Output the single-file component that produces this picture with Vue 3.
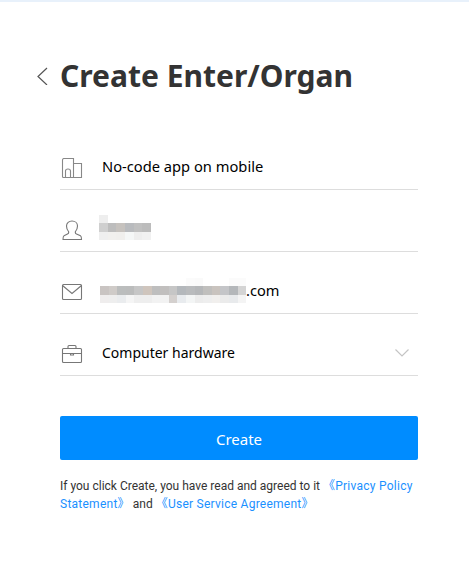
<template>
  <div class="page">
    <div class="top-line"></div>
    <div class="head">
      <svg class="back" viewBox="0 0 12 18" width="12" height="18" fill="none" stroke="#555" stroke-width="1.2">
        <path d="M11 1L2 9.5L11 18" />
      </svg>
      <h1>Create Enter/Organ</h1>
    </div>
    <form class="form" @submit.prevent>
      <div class="row">
        <svg class="ico" viewBox="0 0 22 20" width="22" height="20" fill="none" stroke="#888" stroke-width="1.1">
          <path d="M2.5 19.5H20.5V5.5H12.5V19.5M12.5 19.5V0.5H3Q1.5 0.5 1.5 2V18.5Q1.5 19.5 2.5 19.5M4.5 19.5V13Q4.5 11 7 11Q9.5 11 9.5 13V19.5" />
        </svg>
        <span class="val big">No-code app on mobile</span>
      </div>
      <div class="row">
        <svg class="ico" viewBox="0 0 22 20" width="22" height="20" fill="none" stroke="#777" stroke-width="1.1">
          <path d="M7.5 11.5C5.5 9 5.5 7 5.5 6C5.5 3 8 1 11 1S16.5 3 16.5 6C16.5 7 16.5 9 14.5 11.5C14 12.8 14.5 13.5 15.5 14L19.5 15.8C20.5 16.3 20.5 17.5 20.5 19.5H2C2 17.5 2 16.3 3 15.8L6.5 14C7.5 13.5 8 12.8 7.5 11.5Z" />
        </svg>
        <div class="mosaic name">
          <i v-for="(c, i) in nameBlocks" :key="i" :style="{ background: c }"></i>
        </div>
      </div>
      <div class="row">
        <svg class="ico" viewBox="0 0 22 20" width="22" height="20" fill="none" stroke="#777" stroke-width="1.1">
          <rect x="1.5" y="2.5" width="19" height="15" rx="1" />
          <path d="M1.5 3.5L11 11.5L20.5 3.5" />
        </svg>
        <div class="mosaic email">
          <i v-for="(c, i) in emailBlocks" :key="i" :style="{ background: c }"></i>
        </div>
        <span class="val dotcom">.com</span>
      </div>
      <div class="row">
        <svg class="ico" viewBox="0 0 22 20" width="22" height="20" fill="none" stroke="#777" stroke-width="1.1">
          <rect x="1.5" y="4.5" width="19" height="14" rx="1" />
          <path d="M7 4.5V2.5Q7 1.5 8 1.5H14Q15 1.5 15 2.5V4.5M1.5 9.5H20.5" />
          <path d="M9.5 9.5H12.5V11H9.5Z" />
        </svg>
        <span class="val">Computer hardware</span>
        <svg class="caret" viewBox="0 0 14 8" width="14" height="8" fill="none" stroke="#c4c4c4" stroke-width="1.2">
          <path d="M0.5 0.5L7 7L13.5 0.5" />
        </svg>
      </div>
      <button type="submit" class="submit">Create</button>
      <p class="agree">
        <span>If you click Create, you have read and agreed to it </span><a href="#">《Privacy Policy</a><br />
        <a href="#">Statement》</a><span> and </span><a href="#">《User Service Agreement》</a>
      </p>
    </form>
  </div>
</template>

<script setup>
const w = "#ffffff";
const nameBlocks = [
  "#eeeeee", w, w, w, w, w,
  "#cfcfcf", "#bdbdbd", "#c6c2be", "#b9bbbe", "#c0c0c0", "#bcbcbc",
  "#efefef", "#f1f0ee", "#f0efed", "#f5f7f7", "#eeeeee", "#f1f1f1",
];
const emailBlocks = [
  w, w, w, w, w, w, w, w, w, w, "#fbfbfb", "#fafafa", w, w, w, "#fbfbfb", "#fbfbfb",
  "#c9c4c2", "#cfcbc8", "#bbbdbd", "#bbbcbc", "#c6c6c6", "#cfc5bd", "#bebebe", "#c1bfbe", "#c6c6c6", "#b4b8bc",
  "#b9bbbd", "#b5b7b9", "#c0bfbd", "#c9c3be", "#c4c5c8", "#b4b7ba", "#d4d4d4",
  "#efeded", "#eeeeee", "#eaecee", "#f5f5f5", "#eeeeee", "#eeeeee", "#f2f2f2", "#f2f2f2", "#d4d0ce", "#e8ebee",
  "#f3f5f5", "#ececec", "#eeeeee", "#f1efed", "#ebebeb", "#e8eaec", "#f4f4f4",
];
</script>

<style scoped>
.page {
  width: 469px;
  height: 562px;
  overflow: hidden;
  background: #fff;
  font-family: "Noto Sans", "Open Sans", sans-serif;
  color: #000;
}
.top-line {
  height: 2px;
  background: #e8f1fb;
}
.head {
  display: flex;
  align-items: center;
  height: 40px;
  margin-top: 54px;
  padding-left: 36px;
}
.back {
  flex: none;
  margin-right: 12px;
}
h1 {
  margin: 0;
  font-size: 30px;
  font-weight: 700;
  line-height: 40px;
  color: #333;
  white-space: nowrap;
}
.form {
  width: 358px;
  margin: 32px 0 0 60px;
}
.row {
  display: flex;
  align-items: center;
  box-sizing: border-box;
  height: 62px;
  padding-top: 18px;
  border-bottom: 1px solid #ddd;
}
.ico {
  flex: none;
  margin-left: 1px;
  margin-right: 19px;
}
.val {
  margin-bottom: 2px;
  font-size: 14px;
  line-height: 20px;
}
.big {
  margin-bottom: 3px;
  font-size: 14.7px;
}
.dotcom {
  margin-bottom: 3px;
  font-size: 14.6px;
}
.caret {
  margin-left: auto;
  margin-right: 9px;
  margin-bottom: 2px;
}
.mosaic {
  display: grid;
}
.mosaic i {
  display: block;
  height: 8.67px;
}
.name {
  grid-template-columns: repeat(6, 8.67px);
  margin: 0 0 4px -3px;
}
.email {
  grid-template-columns: repeat(17, 8.6px);
  margin: 0 0 2px -2px;
}
.submit {
  display: block;
  width: 100%;
  height: 44px;
  margin-top: 40px;
  padding-top: 2px;
  border: none;
  border-radius: 2px;
  background: #008cff;
  color: #fff;
  font-family: inherit;
  font-size: 15px;
}
.agree {
  margin: 17px 0 0;
  font-family: Roboto, "Noto Sans CJK SC", sans-serif;
  font-size: 12px;
  line-height: 18px;
  color: #333;
  white-space: nowrap;
}
.agree a {
  color: #1a90ff;
  letter-spacing: 0.25px;
  text-decoration: none;
}
</style>

<style>
html, body {
  margin: 0;
  background: #fff;
}
</style>
